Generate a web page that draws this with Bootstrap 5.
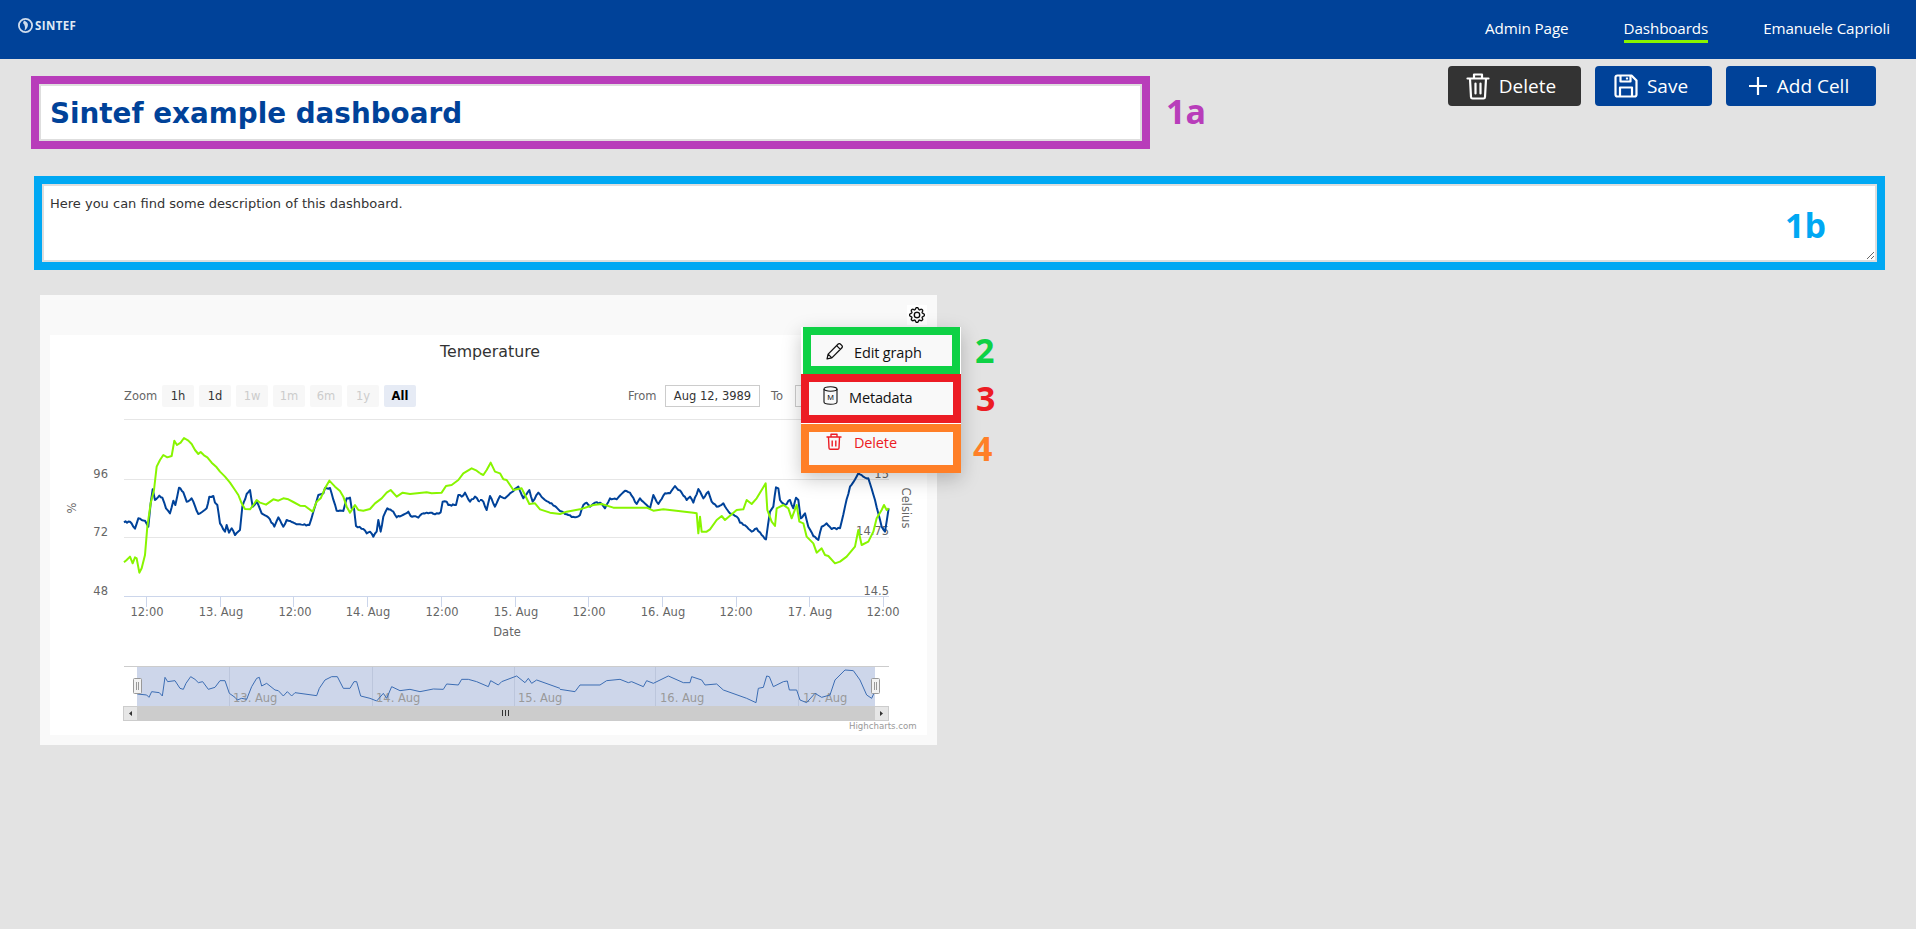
<!doctype html>
<html lang="en">
<head>
<meta charset="utf-8">
<title>Sintef example dashboard</title>
<link rel="stylesheet" href="https://cdn.jsdelivr.net/npm/bootstrap@5.3.0/dist/css/bootstrap.min.css">
<style>
:root{--brand:#004299;--ui:"Open Sans","Noto Sans",sans-serif;--verd:"DejaVu Sans",sans-serif}
body{background:#e3e3e3;font-family:var(--ui);min-height:929px;overflow:hidden}
.topbar{height:59px;background:var(--brand);padding:0 26px 0 18px;align-items:flex-start}
.logo-wrap{margin-top:18px;gap:2px;color:#dfe8f3;font:700 11.5px/14px var(--ui);letter-spacing:.4px}
.top-links{gap:55px;margin-top:18px}
.top-link{color:#fff;font-size:15.2px;line-height:21px;text-decoration:none;padding-bottom:1px;display:block;letter-spacing:-.1px}
.top-link.on{border-bottom:3px solid #88f500}
.head-row{padding:7px 40px 0 31px}
.anno{border:8px solid;}
.anno-purple{border-color:#b83dba;width:1119px;height:73px;margin-top:10px}
.title-field{height:57px;border:2px solid #dedede;border-radius:0;background:#fff;padding:1px 9px 0;color:var(--brand);font:700 27.8px/53px var(--verd)}
.tag{font:700 34px/1 var(--ui)}
.tag-a{color:#b83dba;margin:28px 0 0 16px}
.act{height:40px;border-radius:4px;border:0;color:#fff;font-size:19px;line-height:24px;padding:0 5px 0 0;gap:9px;display:inline-flex;align-items:center;justify-content:center}
.act:hover,.act:active{color:#fff}
.act-dark,.act-dark:hover{background:#333}
.act-blue,.act-blue:hover{background:var(--brand)}
.w-del{width:133px;padding-right:7px}.w-save{width:117px}.w-add{width:150px}
.act-set{gap:14px}
.desc-wrap{margin:27px 31px 0 34px;height:94px;border-color:#00a8f3;position:relative}
.desc-field{width:100%;height:78px;border:2px solid #dedede;border-radius:0;padding:10px 6px;font:13px/16px var(--verd);color:#333;display:block;outline:0}
.tag-b{color:#00a8f3;position:absolute;right:51px;top:24px}
.chart-card{margin:25px 0 0 40px;width:897px;height:450px;background:#f9f9f9;border:0;border-radius:0;position:relative;padding:0 10px}
.chart-head{height:40px;padding:10px 0 0 0}
.gear-box{width:20px;height:20px;background:#fff;margin-right:0}
.chart-pic{display:block;width:877px;height:400px;background:#fff}
.chart-pic text{font-family:var(--verd);font-size:11.5px;fill:#666}
.chart-pic .c-title{font-size:15.8px;fill:#333}
.chart-pic .c-mid{text-anchor:middle}
.chart-pic .c-end{text-anchor:end}
.chart-pic .c-off{fill:#ccc}
.chart-pic .c-dark{fill:#333}
.chart-pic .c-on{fill:#000;font-weight:700}
.chart-pic .c-nav{fill:#999;font-size:11.5px}
.chart-pic .c-credit{fill:#999;font-size:8.6px}
.gear-menu{position:absolute;left:761px;top:32px;width:159px;height:146px;box-shadow:0 6px 18px rgba(0,0,0,.22);background:#fff;display:block}
.gear-item{background:#f9f9f9;font-size:14.5px;line-height:20px;display:flex;color:#111;text-decoration:none;letter-spacing:-.15px}
.gi-edit{margin:0 1px 0 2px;height:47px;border-color:#0ed145;padding:8px 0 0 15px;gap:11px;align-items:flex-start}
.gi-meta{height:49px;border-color:#ec1c24;padding:4px 0 0 14px;gap:11px;align-items:flex-start}
.gi-meta span{margin-top:2px}
.gi-del{height:49px;margin-top:1px;border-color:#ff7f27;padding:1px 0 0 17px;gap:12px;color:#ec1c24;align-items:flex-start}
.tag-n{position:absolute;left:calc(100% + 15px)}
.tag-2{color:#0ed145;top:6px;margin-left:-1px}.tag-3{color:#ec1c24;top:54px}.tag-4{color:#ff7f27;top:104px;margin-left:-3px}
</style>
</head>
<body>
<nav class="navbar d-flex justify-content-between topbar">
  <div class="d-flex align-items-center logo-wrap">
    <svg width="15" height="15" viewBox="0 0 15 15" aria-hidden="true"><circle cx="7.5" cy="7.5" r="6.6" fill="none" stroke="#cfdcec" stroke-width="1.8"/><path d="M6 2.5c3 1 4.5 3 3.8 5.5-.5 2.200-1.800 3.800-3.300 4.500C7.500 9.500 7 7 5 5z" fill="#cfdcec"/></svg>
    <span>SINTEF</span>
  </div>
  <div class="d-flex top-links">
    <a class="top-link" href="#">Admin Page</a>
    <a class="top-link on" href="#">Dashboards</a>
    <a class="top-link" href="#">Emanuele Caprioli</a>
  </div>
</nav>

<div class="d-flex align-items-start head-row">
  <div class="anno anno-purple"><div class="title-field">Sintef example dashboard</div></div>
  <div class="tag tag-a">1a</div>
  <div class="d-flex ms-auto act-set">
    <button class="btn act act-dark w-del" type="button">
      <svg width="24" height="28" viewBox="0 0 24 28" fill="none" stroke="#fff" stroke-width="2.200" stroke-linejoin="round" stroke-linecap="round" aria-hidden="true"><path d="M1.500 6.500h21M8 6V2.500h8V6M4 7l1 18q.1 1.500 1.500 1.500h11q1.400 0 1.500-1.500l1-18M9.500 11.500v10M14.500 11.500v10"/></svg>
      <span>Delete</span>
    </button>
    <button class="btn act act-blue w-save" type="button">
      <svg width="24" height="24" viewBox="0 0 24 24" fill="none" stroke="#fff" stroke-width="2.200" stroke-linejoin="round" aria-hidden="true"><path d="M3.500 1.500h14l5 5v14q0 2-2 2h-17q-2 0-2-2v-17q0-2 2-2z"/><path d="M6.500 1.500v6h10v-6M13 3.500v2M6 22.500v-9h12v9"/></svg>
      <span>Save</span>
    </button>
    <button class="btn act act-blue w-add" type="button">
      <svg width="20" height="20" viewBox="0 0 20 20" fill="none" stroke="#fff" stroke-width="2.200" aria-hidden="true"><path d="M10 1v18M1 10h18"/></svg>
      <span>Add Cell</span>
    </button>
  </div>
</div>

<div class="anno desc-wrap">
  <textarea class="desc-field">Here you can find some description of this dashboard.</textarea>
  <div class="tag tag-b">1b</div>
</div>

<div class="card chart-card">
  <div class="d-flex justify-content-end chart-head">
    <div class="gear-box d-flex align-items-center justify-content-center">
      <svg width="16" height="16" viewBox="0 0 16 16" fill="#000" stroke="#000" stroke-width=".3" aria-hidden="true"><path d="M8 4.754a3.246 3.246 0 1 0 0 6.492 3.246 3.246 0 0 0 0-6.492zM5.754 8a2.246 2.246 0 1 1 4.492 0 2.246 2.246 0 0 1-4.492 0z"/><path d="M9.796 1.343c-.527-1.790-3.065-1.790-3.592 0l-.094.319a.873.873 0 0 1-1.255.52l-.292-.16c-1.640-.892-3.433.902-2.540 2.541l.159.292a.873.873 0 0 1-.52 1.255l-.319.094c-1.790.527-1.790 3.065 0 3.592l.319.094a.873.873 0 0 1 .52 1.255l-.16.292c-.892 1.640.901 3.434 2.541 2.540l.292-.159a.873.873 0 0 1 1.255.52l.094.319c.527 1.790 3.065 1.790 3.592 0l.094-.319a.873.873 0 0 1 1.255-.52l.292.16c1.640.893 3.434-.902 2.540-2.541l-.159-.292a.873.873 0 0 1 .52-1.255l.319-.094c1.790-.527 1.790-3.065 0-3.592l-.319-.094a.873.873 0 0 1-.52-1.255l.16-.292c.893-1.640-.902-3.433-2.541-2.540l-.292.159a.873.873 0 0 1-1.255-.52l-.094-.319zm-2.633.283c.246-.835 1.428-.835 1.674 0l.094.319a1.873 1.873 0 0 0 2.693 1.115l.291-.16c.764-.415 1.600.42 1.184 1.185l-.159.292a1.873 1.873 0 0 0 1.116 2.692l.318.094c.835.246.835 1.428 0 1.674l-.319.094a1.873 1.873 0 0 0-1.115 2.693l.16.291c.415.764-.42 1.600-1.185 1.184l-.291-.159a1.873 1.873 0 0 0-2.693 1.116l-.094.318c-.246.835-1.428.835-1.674 0l-.094-.319a1.873 1.873 0 0 0-2.692-1.115l-.292.16c-.764.415-1.600-.42-1.184-1.185l.159-.291A1.873 1.873 0 0 0 1.945 8.930l-.319-.094c-.835-.246-.835-1.428 0-1.674l.319-.094A1.873 1.873 0 0 0 3.060 4.377l-.16-.292c-.415-.764.42-1.600 1.185-1.184l.292.159a1.873 1.873 0 0 0 2.692-1.115l.094-.319z"/></svg>
    </div>
  </div>

  <svg class="chart-pic" viewBox="50 335 877 400" role="img" aria-label="Temperature chart">
    <text class="c-title c-mid" x="490" y="357">Temperature</text>

    <text x="124" y="400">Zoom</text>
    <g fill="#f7f7f7">
      <rect x="162" y="385" width="32" height="22" rx="2"/><rect x="199" y="385" width="32" height="22" rx="2"/>
      <rect x="236" y="385" width="32" height="22" rx="2"/><rect x="273" y="385" width="32" height="22" rx="2"/>
      <rect x="310" y="385" width="32" height="22" rx="2"/><rect x="347" y="385" width="32" height="22" rx="2"/>
      <rect x="384" y="385" width="32" height="22" rx="2" fill="#e6ebf5"/>
    </g>
    <text class="c-mid c-dark" x="178" y="400">1h</text><text class="c-mid c-dark" x="215" y="400">1d</text>
    <text class="c-mid c-off" x="252" y="400">1w</text><text class="c-mid c-off" x="289" y="400">1m</text>
    <text class="c-mid c-off" x="326" y="400">6m</text><text class="c-mid c-off" x="363" y="400">1y</text>
    <text class="c-mid c-on" x="400" y="400">All</text>

    <text x="628" y="400">From</text>
    <rect x="665.500" y="385.500" width="94" height="21" fill="#fff" stroke="#ccc"/>
    <text class="c-mid c-dark" x="712.500" y="400">Aug 12, 3989</text>
    <text x="771" y="400">To</text>
    <rect x="795.500" y="385.500" width="94" height="21" fill="#fff" stroke="#ccc"/>

    <g stroke="#e6e6e6" fill="none">
      <path d="M124 419.500H889M124 479.500H889M124 537.500H889"/>
    </g>
    <path d="M124 596.500H889M146.500 597v10M220.500 597v10M293.500 597v10M367.500 597v10M441.500 597v10M515.500 597v10M588.500 597v10M662.500 597v10M736.500 597v10M809.500 597v10M883.500 597v10" stroke="#ccd6eb" fill="none"/>

    <text class="c-end" x="108" y="478">96</text><text class="c-end" x="108" y="536">72</text><text class="c-end" x="108" y="595">48</text>
    <text class="c-end" x="889" y="478">15</text><text class="c-end" x="889" y="535">14.75</text><text class="c-end" x="889" y="595">14.5</text>
    <text class="c-mid" transform="translate(76 508) rotate(-90)">%</text>
    <text class="c-mid" transform="translate(902 508) rotate(90)">Celsius</text>
    <g class="x-labels">
      <text class="c-mid" x="147" y="616">12:00</text><text class="c-mid" x="221" y="616">13. Aug</text>
      <text class="c-mid" x="295" y="616">12:00</text><text class="c-mid" x="368" y="616">14. Aug</text>
      <text class="c-mid" x="442" y="616">12:00</text><text class="c-mid" x="516" y="616">15. Aug</text>
      <text class="c-mid" x="589" y="616">12:00</text><text class="c-mid" x="663" y="616">16. Aug</text>
      <text class="c-mid" x="736" y="616">12:00</text><text class="c-mid" x="810" y="616">17. Aug</text>
      <text class="c-mid" x="883" y="616">12:00</text>
    </g>
    <text class="c-mid" x="507" y="636">Date</text>

    <g fill="none" stroke-width="6" stroke-linejoin="round">
      <g transform="translate(30 330) scale(.33333)">
        <polyline class="wobble" stroke="#004299" points="282,577 300,575 315,596 325,565 345,572 355,590 362,520 368,478 375,510 388,497 397,503 408,535 420,550 430,512 436,525 447,473 460,487 470,515 485,505 505,552 520,543 530,535 538,500 550,498 555,518 562,525 570,580 585,605 590,585 597,608 605,595 615,615 630,600 637,530 650,492 660,480 668,530 680,515 695,550 715,562 733,590 745,562 760,590 770,570 800,583 838,585 850,545 865,495 880,490 885,474 900,474 920,542 940,543 950,505 960,503 965,535 972,535 978,588 1000,597 1010,610 1020,605 1030,620 1040,605 1045,570 1052,605 1060,560 1072,535 1090,545 1100,562 1135,545 1142,558 1165,563 1180,550 1205,548 1215,553 1232,547 1238,515 1250,515 1255,525 1278,525 1285,495 1295,500 1305,488 1320,515 1335,500 1350,515"/>
      </g>
      <g transform="translate(480 430) scale(.33333)">
        <polyline class="wobble" stroke="#004299" points="0,210 10,215 20,240 30,198 45,230 60,198 75,205 90,190 115,170 130,205 148,180 158,215 175,188 195,210 215,220 235,238 255,252 285,262 300,255 310,225 320,218 330,230 345,218 360,218 375,235 390,205 410,208 435,182 450,188 470,222 480,205 500,225 510,235 520,195 535,222 555,190 570,190 585,168 605,188 620,210 630,200 640,218 655,177 665,195 670,205 685,185 695,215 710,230 730,220 750,250 775,265 780,278 800,290 815,305 830,295 845,315 858,328 870,245 880,230 888,172 895,175 900,210 915,225 930,210 940,235 948,203 955,210 962,265 975,250 985,290 1000,318 1015,330 1025,290 1040,280 1055,297 1080,295 1095,230 1110,170 1135,130 1150,140 1165,145 1185,210 1205,290 1215,305 1226,235"/>
      </g>
      <g transform="translate(30 330) scale(.33333)">
        <polyline stroke="#88f500" points="282,697 290,690 300,680 308,700 315,682 320,685 328,728 335,715 345,675 352,590 362,520 372,480 380,410 390,390 400,375 412,382 425,378 433,332 441,345 452,338 462,324 475,332 485,342 495,360 505,372 512,366 522,376 532,382 545,398 560,412 570,425 585,440 600,458 615,480 625,495 635,520 645,537 660,538 670,525 680,510 690,518 708,524 730,508 745,512 760,505 775,508 790,516 810,527 825,528 848,545 860,515 872,505 885,475 898,452 915,470 930,483 940,500 950,530 960,548 975,525 985,540 1000,542 1020,537 1035,520 1055,505 1070,488 1082,480 1100,500 1118,488 1140,492 1190,487 1205,490 1235,488 1248,468 1265,465 1285,450 1300,430 1325,415 1340,422 1350,430"/>
      </g>
      <g transform="translate(480 430) scale(.33333)">
        <polyline stroke="#88f500" points="0,130 10,135 20,120 32,98 45,125 60,130 70,148 80,150 100,180 125,175 135,195 148,222 165,220 180,238 210,248 240,252 260,245 300,238 340,225 365,222 400,233 500,233 520,242 550,238 640,248 650,250 655,310 660,260 665,305 680,305 690,298 710,270 725,258 735,270 770,240 790,238 800,210 815,222 830,205 845,180 857,160 862,240 875,275 885,288 890,235 910,225 925,235 935,265 950,225 958,275 970,280 980,320 1000,340 1010,368 1025,355 1035,375 1045,378 1065,400 1080,395 1100,380 1125,350 1135,300 1145,345 1165,335 1180,305 1190,265 1205,240 1212,225 1220,240 1226,235"/>
      </g>
    </g>

    <rect x="137" y="666.500" width="738" height="40" fill="#cdd6ea"/>
    <path d="M124 666.500H889" stroke="#ccc" fill="none"/>
    <path d="M229.500 667v39M372.500 667v39M514.500 667v39M655.500 667v39M798.500 667v39" stroke="#bcc6dc" fill="none"/>
    <text class="c-nav" x="233" y="702">13. Aug</text><text class="c-nav" x="376" y="702">14. Aug</text>
    <text class="c-nav" x="518" y="702">15. Aug</text><text class="c-nav" x="660" y="702">16. Aug</text>
    <text class="c-nav" x="803" y="702">17. Aug</text>
    <g fill="none" stroke="#3b6cb3" stroke-width="3" stroke-linejoin="round">
      <g transform="translate(100 640) scale(.33333)">
        <polyline points="112,162 140,165 147,172 155,155 178,158 187,168 195,112 203,125 225,122 240,145 250,148 258,130 272,110 285,118 295,128 308,125 325,148 345,142 360,122 375,122 388,160 405,172 412,180 425,175 440,178 455,140 470,115 478,112 485,138 500,130 525,150 535,152 550,168 562,155 575,168 585,158 650,167 658,145 675,120 695,110 712,110 730,145 750,145 762,125 770,125 782,168 810,175 830,183 850,160 860,175 875,140 900,152 930,148 960,155 1000,147 1030,148 1040,132 1075,135 1085,118 1105,118 1130,125 1165,140 1172,122 1195,135 1205,125 1250,108 1275,128 1285,115 1295,130 1310,120 1380,145"/>
      </g>
      <g transform="translate(520 640) scale(.33333)">
        <polyline points="120,148 165,155 180,135 240,135 260,122 300,118 325,128 335,125 370,140 380,122 400,130 445,108 490,128 510,128 515,110 545,120 555,135 590,132 610,150 680,175 708,188 715,145 730,142 740,108 748,110 760,140 780,130 790,125 802,123 808,150 830,150 840,180 860,188 885,160 905,172 930,165 945,120 975,90 1000,92 1020,120 1040,165 1055,175 1064,155"/>
      </g>
    </g>
    <g fill="#f2f2f2" stroke="#999">
      <rect x="133.500" y="678.500" width="8" height="15" rx="1"/>
      <rect x="871.500" y="678.500" width="8" height="15" rx="1"/>
    </g>
    <path d="M136.500 682v8M138.500 682v8M874.500 682v8M876.500 682v8" stroke="#999" fill="none"/>

    <rect x="123" y="706" width="766" height="15" fill="#ccc"/>
    <rect x="123.500" y="706.500" width="14" height="14" fill="#e6e6e6" stroke="#ccc"/>
    <rect x="874.500" y="706.500" width="14" height="14" fill="#e6e6e6" stroke="#ccc"/>
    <path d="M132 711v5l-3-2.500zM880 711v5l3-2.500z" fill="#333"/>
    <path d="M502.500 710v6M505.500 710v6M508.500 710v6" stroke="#333" fill="none"/>
    <text class="c-credit" x="849" y="729">Highcharts.com</text>
  </svg>

  <div class="gear-menu dropdown-menu p-0 border-0 rounded-0">
    <a class="gear-item anno gi-edit" href="#">
      <svg width="17" height="17" viewBox="0 0 16 16" fill="none" stroke="#111" stroke-width="1.200" stroke-linejoin="round" aria-hidden="true"><path d="M1 15l1-4.500L11.500 1q1-.8 2 0l1.500 1.500q.8 1 0 2L5.500 14zM10 2.500L13.500 6M2 10.500L5.500 14"/></svg>
      <span>Edit graph</span>
    </a>
    <a class="gear-item anno gi-meta" href="#">
      <svg width="15" height="19" viewBox="0 0 15 19" fill="none" stroke="#111" stroke-width="1.100" aria-hidden="true"><ellipse cx="7.500" cy="3" rx="6.500" ry="2.200"/><path d="M1 3v13q0 2.200 6.500 2.200T14 16V3"/><text x="7.500" y="14" text-anchor="middle" font-size="8" stroke="none" fill="#111" font-family="Liberation Sans,sans-serif">M</text></svg>
      <span>Metadata</span>
    </a>
    <a class="gear-item anno gi-del" href="#">
      <svg width="16" height="17" viewBox="0 0 16 17" fill="none" stroke="#ec1c24" stroke-width="1.400" stroke-linejoin="round" aria-hidden="true"><path d="M.5 4h15M5 4V1.200h6V4M2.500 4.500l.5 10.500q.1 1.300 1.300 1.300h7.400q1.200 0 1.300-1.300l.5-10.500M6.200 7.500v6M9.800 7.500v6"/></svg>
      <span>Delete</span>
    </a>
    <div class="tag tag-n tag-2">2</div>
    <div class="tag tag-n tag-3">3</div>
    <div class="tag tag-n tag-4">4</div>
  </div>
</div>
<script src="https://cdn.jsdelivr.net/npm/bootstrap@5.3.0/dist/js/bootstrap.bundle.min.js"></script>
<script>
/* Fine sensor noise for the humidity series: each traced segment is subdivided and gets a repeatable small offset. */
document.querySelectorAll('polyline.wobble').forEach(function(line){
  var pts=line.getAttribute('points').trim().split(/\s+/).map(function(p){return p.split(',').map(Number)});
  var out=[],seed=7;
  function rnd(){seed=(seed*16807)%2147483647;return seed/2147483647-.5}
  pts.forEach(function(p,i){
    if(i){
      var q=pts[i-1],n=Math.max(1,Math.round((p[0]-q[0])/5));
      for(var k=1;k<n;k++){var t=k/n;out.push((q[0]+(p[0]-q[0])*t).toFixed(1)+','+(q[1]+(p[1]-q[1])*t+rnd()*5).toFixed(1))}
    }
    out.push(p[0]+','+p[1]);
  });
  line.setAttribute('points',out.join(' '));
});
</script>
</body>
</html>
